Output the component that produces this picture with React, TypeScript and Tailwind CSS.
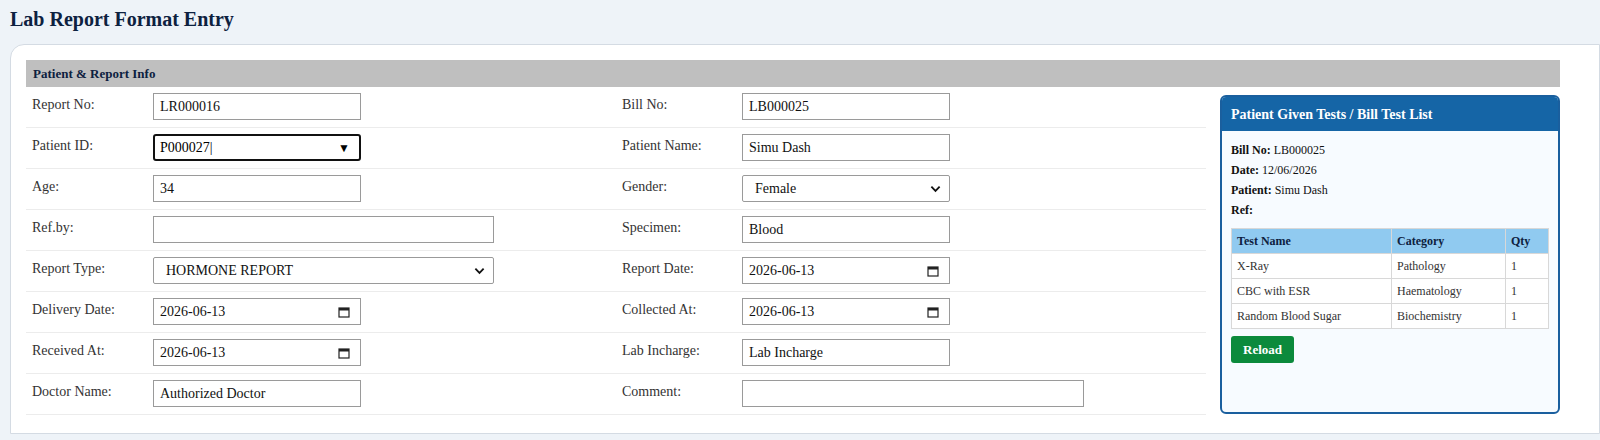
import type { ReactNode } from "react";

const inp =
  "h-[27px] border border-[#9a9a9a] bg-white px-[6px] text-[14px] text-[#111] flex items-center";

function Field({ w = "w-[208px]", children }: { w?: string; children: ReactNode }) {
  return <div className={`${inp} ${w}`}>{children}</div>;
}

function DateBox({ value }: { value: string }) {
  return (
    <Field>
      <span className="flex-1">{value}</span>
      <svg width="12" height="12" viewBox="0 0 12 12" className="mr-[4px]">
        <rect x="1" y="2" width="10" height="9" fill="none" stroke="#222" strokeWidth="1.2" />
        <rect x="1" y="2" width="10" height="2.5" fill="#222" />
      </svg>
    </Field>
  );
}

function SelectBox({ value, w }: { value: string; w: string }) {
  return (
    <div className={`${inp} ${w} rounded-[2px] pl-[12px]`}>
      <span className="flex-1">{value}</span>
      <svg width="11" height="8" viewBox="0 0 12 8" className="mr-[2px]">
        <path d="M1.5 1.5 6 6l4.5-4.5" fill="none" stroke="#111" strokeWidth="2" />
      </svg>
    </div>
  );
}

function Row({ l1, c1, l2, c2 }: { l1: string; c1: ReactNode; l2: string; c2: ReactNode }) {
  return (
    <div className="flex h-[41px] items-start border-b border-[#ececec] pt-[6px]">
      <div className="w-[127px] shrink-0 pl-[6px] pt-[1px] text-[14px] text-[#333]">{l1}</div>
      <div className="w-[469px] shrink-0">{c1}</div>
      <div className="w-[120px] shrink-0 pt-[1px] text-[14px] text-[#333]">{l2}</div>
      <div>{c2}</div>
    </div>
  );
}

const tests = [
  ["X-Ray", "Pathology", "1"],
  ["CBC with ESR", "Haematology", "1"],
  ["Random Blood Sugar", "Biochemistry", "1"],
];

export default function App() {
  return (
    <div
      className="h-[440px] w-full overflow-hidden bg-[#eef3f8]"
      style={{ fontFamily: '"Liberation Serif", "DejaVu Serif", serif' }}
    >
      <h1 className="h-[32px] px-[10px] pt-[7px] text-[20px] font-bold leading-[24px] text-[#0d2140]">Lab Report Format Entry</h1>
      <div className="ml-[10px] mt-[12px] h-[390px] rounded-tl-[14px] border border-[#d4dbe3] bg-white pl-[15px] pr-[39px] pt-[15px]">
        <div className="flex h-[27px] w-[1534px] items-center bg-[#bfbfbf] px-[7px] text-[13px] font-bold text-[#0d2140]">
          Patient &amp; Report Info
        </div>
        <div className="flex w-[1534px]">
          <div className="w-[1180px] shrink-0">
            <Row l1="Report No:" c1={<Field>LR000016</Field>} l2="Bill No:" c2={<Field>LB000025</Field>} />
            <Row
              l1="Patient ID:"
              c1={
                <div className="flex h-[27px] w-[208px] items-center rounded-[3px] border-2 border-[#111] px-[5px] text-[14px]">
                  <span className="flex-1">P000027|</span>
                  <span className="mr-[4px] text-[12px]">▼</span>
                </div>
              }
              l2="Patient Name:"
              c2={<Field>Simu Dash</Field>}
            />
            <Row l1="Age:" c1={<Field>34</Field>} l2="Gender:" c2={<SelectBox value="Female" w="w-[208px]" />} />
            <Row l1="Ref.by:" c1={<Field w="w-[341px]"> </Field>} l2="Specimen:" c2={<Field>Blood</Field>} />
            <Row
              l1="Report Type:"
              c1={<SelectBox value="HORMONE REPORT" w="w-[341px]" />}
              l2="Report Date:"
              c2={<DateBox value="2026-06-13" />}
            />
            <Row l1="Delivery Date:" c1={<DateBox value="2026-06-13" />} l2="Collected At:" c2={<DateBox value="2026-06-13" />} />
            <Row l1="Received At:" c1={<DateBox value="2026-06-13" />} l2="Lab Incharge:" c2={<Field>Lab Incharge</Field>} />
            <Row l1="Doctor Name:" c1={<Field>Authorized Doctor</Field>} l2="Comment:" c2={<Field w="w-[342px]"> </Field>} />
          </div>
          <div className="ml-[14px] mt-[8px] h-[319px] w-[340px] shrink-0 overflow-hidden rounded-[6px] border-2 border-[#1a5f9e] bg-[#f7fbff]">
            <div className="flex h-[34px] items-center bg-[#1565a6] px-[9px] text-[14px] font-bold text-white">
              Patient Given Tests / Bill Test List
            </div>
            <div className="px-[9px] pt-[9px] text-[12px] leading-[20px] text-[#111]">
              <div><b>Bill No:</b> LB000025</div>
              <div><b>Date:</b> 12/06/2026</div>
              <div><b>Patient:</b> Simu Dash</div>
              <div><b>Ref:</b></div>
              <table className="mt-[8px] w-full border-collapse text-[12px]">
                <thead>
                  <tr className="bg-[#90caf0] text-left text-[#0d2140]">
                    <th className="h-[25px] border border-[#d8d8d8] px-[5px]">Test Name</th>
                    <th className="w-[114px] border border-[#d8d8d8] px-[5px]">Category</th>
                    <th className="w-[43px] border border-[#d8d8d8] px-[5px]">Qty</th>
                  </tr>
                </thead>
                <tbody className="bg-white text-[#333]">
                  {tests.map((t) => (
                    <tr key={t[0]}>
                      {t.map((c, i) => (
                        <td key={i} className="h-[25px] border border-[#d8d8d8] px-[5px]">{c}</td>
                      ))}
                    </tr>
                  ))}
                </tbody>
              </table>
              <button className="mt-[7px] h-[27px] rounded-[3px] bg-[#0b8a3c] px-[12px] text-[13px] font-bold text-white">
                Reload
              </button>
            </div>
          </div>
        </div>
      </div>
    </div>
  );
}
